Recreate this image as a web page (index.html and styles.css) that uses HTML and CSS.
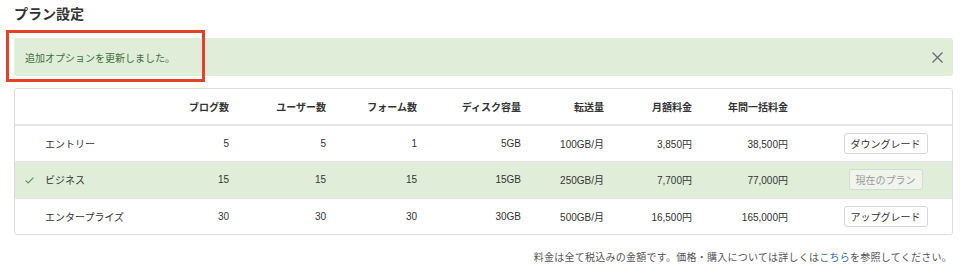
FILE: index.html
```html
<!DOCTYPE html>
<html lang="ja">
<head>
    <meta charset="UTF-8">
    <meta name="viewport" content="width=device-width, initial-scale=1.0">
    <title>プラン設定</title>
    <link rel="stylesheet" href="styles.css">
</head>
<body>
    <div class="page">
        <h1 class="page-title">プラン設定</h1>

        <div class="alert">
            <span class="alert-text">追加オプションを更新しました。</span>
            <button class="alert-close" aria-label="閉じる">
                <svg width="11" height="11" viewBox="0 0 11 11">
                    <path d="M0.5 0.5 L10.5 10.5 M10.5 0.5 L0.5 10.5" stroke="#6b6b6b" stroke-width="1.3" fill="none"/>
                </svg>
            </button>
            <span class="highlight"></span>
        </div>

        <table class="plans">
            <colgroup>
                <col class="c-name">
                <col class="c-blog">
                <col class="c-user">
                <col class="c-form">
                <col class="c-disk">
                <col class="c-transfer">
                <col class="c-month">
                <col class="c-year">
                <col class="c-action">
            </colgroup>
            <thead>
                <tr>
                    <th></th>
                    <th>ブログ数</th>
                    <th>ユーザー数</th>
                    <th>フォーム数</th>
                    <th>ディスク容量</th>
                    <th>転送量</th>
                    <th>月額料金</th>
                    <th>年間一括料金</th>
                    <th></th>
                </tr>
            </thead>
            <tbody>
                <tr>
                    <td class="name"><span class="mark"></span>エントリー</td>
                    <td>5</td>
                    <td>5</td>
                    <td>1</td>
                    <td>5GB</td>
                    <td>100GB/月</td>
                    <td>3,850円</td>
                    <td>38,500円</td>
                    <td class="action"><button class="btn">ダウングレード</button></td>
                </tr>
                <tr class="current">
                    <td class="name"><span class="mark">
                        <svg width="9" height="7" viewBox="0 0 9 7">
                            <path d="M0.6 3.6 L3.2 6 L8.4 0.7" stroke="#4f9a5a" stroke-width="1.2" fill="none"/>
                        </svg>
                    </span>ビジネス</td>
                    <td>15</td>
                    <td>15</td>
                    <td>15</td>
                    <td>15GB</td>
                    <td>250GB/月</td>
                    <td>7,700円</td>
                    <td>77,000円</td>
                    <td class="action"><button class="btn" disabled>現在のプラン</button></td>
                </tr>
                <tr>
                    <td class="name"><span class="mark"></span>エンタープライズ</td>
                    <td>30</td>
                    <td>30</td>
                    <td>30</td>
                    <td>30GB</td>
                    <td>500GB/月</td>
                    <td>16,500円</td>
                    <td>165,000円</td>
                    <td class="action"><button class="btn">アップグレード</button></td>
                </tr>
            </tbody>
        </table>

        <p class="note">料金は全て税込みの金額です。価格・購入については詳しくは<a href="#">こちら</a>を参照してください。</p>
    </div>
</body>
</html>
```

FILE: styles.css
```css
/* ===== BASE ===== */
* {
    margin: 0;
    padding: 0;
    box-sizing: border-box;
}

body {
    font-family: "Liberation Sans", "Noto Sans CJK JP", sans-serif;
    font-size: 10px;
    color: #333;
    background: #fff;
}

.page {
    width: 939px;
    margin-left: 14px;
}

.page-title {
    margin-top: 4px;
    font-size: 14px;
    line-height: 20px;
    font-weight: 700;
    color: #333;
}

/* ===== ALERT ===== */
.alert {
    position: relative;
    display: flex;
    align-items: center;
    justify-content: space-between;
    height: 38px;
    margin-top: 14px;
    padding: 0 10px 0 11px;
    background: #e0eed9;
    border-radius: 3px;
    color: #3c6e3d;
}

.alert-text {
    font-size: 10px;
}

.alert-close {
    display: flex;
    border: none;
    background: none;
    cursor: pointer;
}

/* annotation frame laid over the message */
.highlight {
    position: absolute;
    left: -8px;
    top: -8px;
    width: 199px;
    height: 52px;
    border: 3px solid #e5402a;
    pointer-events: none;
}

/* ===== TABLE ===== */
.plans {
    width: 100%;
    margin-top: 12px;
    table-layout: fixed;
    border-collapse: separate;
    border-spacing: 0;
    border: 1px solid #dddddd;
    border-radius: 3px;
}

.c-name { width: 135px; }
.c-blog { width: 89px; }
.c-user { width: 97px; }
.c-form { width: 91px; }
.c-disk { width: 104px; }
.c-transfer { width: 83px; }
.c-month { width: 88px; }
.c-year { width: 96px; }

.plans th,
.plans td {
    padding: 0 10px 0 0;
    text-align: right;
    vertical-align: middle;
    white-space: nowrap;
}

.plans th {
    height: 35px;
    font-weight: 700;
}

.plans td {
    height: 36.5px;
    border-top: 2px solid #e6e6e6;
}

.plans .current td {
    background: #e0eed9;
}

.plans td.name {
    padding-left: 10px;
    text-align: left;
}

.mark {
    display: inline-block;
    width: 20px;
}

.plans td.action {
    padding: 0 0 0 21px;
    text-align: center;
}

.btn {
    height: 21px;
    padding: 0 6px;
    font-family: inherit;
    font-size: 10px;
    color: #333;
    background: #fff;
    border: 1px solid #d6d6d6;
    border-radius: 3px;
    cursor: pointer;
}

.btn:disabled {
    color: #999;
    background: #eff4ec;
    border-color: #d3dccd;
    cursor: default;
}

/* ===== NOTE ===== */
.note {
    margin-top: 16px;
    margin-right: 1px;
    text-align: right;
    font-size: 10px;
    letter-spacing: 0.25px;
    line-height: 14px;
    color: #555;
}

.note a {
    color: #2f6fba;
    text-decoration: none;
}
```
